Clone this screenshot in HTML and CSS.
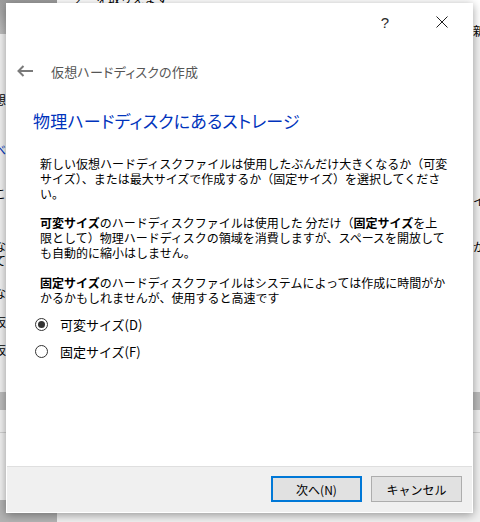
FILE: index.html
```html
<!DOCTYPE html>
<html lang="ja">
<head>
<meta charset="utf-8">
<title>仮想ハードディスクの作成</title>
<link rel="stylesheet" href="styles.css">
</head>
<body>
<div class="screen">
  <div class="backdrop">
    <div class="bg-titlebar"></div>
    <div class="bg-top"><span class="bg-top-text">2 ・を取りえます</span></div>
    <div class="bg-frag f1">想</div>
    <div class="bg-frag f2 blue">ベ</div>
    <div class="bg-frag f3">こ</div>
    <div class="bg-frag f4">な</div>
    <div class="bg-frag f5">て</div>
    <div class="bg-frag f6">な</div>
    <div class="bg-frag f8">仮</div>
    <div class="bg-frag f9">仮</div>
    <div class="bg-frag f10">新</div>
    <div class="bg-frag f11">イ</div>
    <div class="bg-frag f13">か</div>
    <div class="bg-band"></div>
    <div class="bg-line"></div>
    <div class="bg-bottom-left"></div>
  </div>

  <div class="dialog">
    <div class="titlebar">
      <span class="tb-btn help">?</span>
      <span class="tb-btn close">
        <svg width="12" height="12" viewBox="0 0 12 12"><path d="M0.5 0.5 L11.5 11.5 M11.5 0.5 L0.5 11.5" stroke="#1e1e1e" stroke-width="1" fill="none"/></svg>
      </span>
    </div>
    <div class="nav">
      <svg class="back" width="16" height="12" viewBox="0 0 16 12"><path d="M1.5 6 H16 M6.5 1 L1.5 6 L6.5 11" stroke="#7a7a7a" stroke-width="2" fill="none"/></svg>
      <span class="nav-title">仮想ハードディスクの作成</span>
    </div>
    <div class="content">
      <h1 class="heading">物理ハードディスクにあるストレージ</h1>
      <p class="para first">新しい仮想ハードディスクファイルは使用したぶんだけ大きくなるか（可変<br>サイズ）、または最大サイズで作成するか（固定サイズ）を選択してくださ<br>い。</p>
      <p class="para"><b>可変サイズ</b>のハードディスクファイルは使用した 分だけ（<b>固定サイズ</b>を上<br>限として）物理ハードディスクの領域を消費しますが、スペースを開放して<br>も自動的に縮小はしません。</p>
      <p class="para third"><b>固定サイズ</b>のハードディスクファイルはシステムによっては作成に時間がか<br>かるかもしれませんが、使用すると高速です</p>
      <div class="radios">
        <div class="radio"><span class="circle checked"></span><span class="radio-label">可変サイズ(D)</span></div>
        <div class="radio"><span class="circle"></span><span class="radio-label">固定サイズ(F)</span></div>
      </div>
    </div>
    <div class="footer">
      <button class="btn primary">次へ(N)</button>
      <button class="btn">キャンセル</button>
    </div>
  </div>
</div>
</body>
</html>
```

FILE: styles.css
```css
html, body {
  margin: 0;
  padding: 0;
}
body {
  width: 480px;
  height: 522px;
  overflow: hidden;
  background: #ececec;
  font-family: "Noto Sans CJK JP", "Noto Sans", sans-serif;
}
.screen {
  position: relative;
  width: 480px;
  height: 522px;
  overflow: hidden;
}
.backdrop {
  position: absolute;
  inset: 0;
  background: #f0f0f0;
}
.bg-titlebar {
  position: absolute;
  left: 0;
  top: 0;
  width: 57px;
  height: 34px;
  background: linear-gradient(#9c9c9c, #bdbdbd);
}
.bg-top {
  position: absolute;
  left: 57px;
  top: 0;
  right: 0;
  height: 34px;
  background: #fff;
  overflow: hidden;
}
.bg-top-text {
  position: absolute;
  left: 18px;
  top: -10px;
  font-size: 12px;
  color: #000;
}
.bg-frag {
  position: absolute;
  font-size: 12px;
  line-height: 14px;
  color: #000;
}
.bg-frag.blue { color: #0033bc; }
.f1 { left: -6px; top: 93px; }
.f2 { left: -6px; top: 143px; }
.f3 { left: -6px; top: 187px; }
.f4 { left: -6px; top: 239px; }
.f5 { left: -6px; top: 254px; }
.f6 { left: -6px; top: 286px; }
.f8 { left: -6px; top: 315px; }
.f9 { left: -6px; top: 343px; }
.f10 { left: 473px; top: 24px; }
.f11 { left: 473px; top: 194px; }
.f13 { left: 473px; top: 240px; }
.bg-band {
  position: absolute;
  left: 0;
  right: 0;
  top: 392px;
  height: 18px;
  background: #bcbcbc;
}
.bg-line {
  position: absolute;
  left: 0;
  right: 0;
  top: 432px;
  height: 1px;
  background: #d0d0d0;
}
.bg-bottom-left {
  position: absolute;
  left: 0;
  top: 500px;
  width: 57px;
  height: 22px;
  background: #b3b3b3;
}

.dialog {
  position: absolute;
  left: 6px;
  top: 3px;
  width: 467px;
  height: 510px;
  box-sizing: border-box;
  border: 1px solid #fff;
  background: #fff;
  box-shadow: 0 2px 9px rgba(0, 0, 0, 0.38);
  display: flex;
  flex-direction: column;
}
.titlebar {
  height: 36px;
  display: flex;
  justify-content: flex-end;
  align-items: center;
  gap: 11px;
  padding-right: 7px;
}
.tb-btn {
  width: 46px;
  height: 36px;
  display: flex;
  align-items: center;
  justify-content: center;
}
.help {
  font-family: "Liberation Sans", "DejaVu Sans", sans-serif;
  font-size: 15px;
  color: #2a2a2a;
}
.nav {
  height: 62px;
  display: flex;
  align-items: center;
  padding-left: 10px;
}
.back {
  display: block;
}
.nav-title {
  margin-left: 18px;
  font-size: 13px;
  color: #555;
  font-feature-settings: "palt";
  letter-spacing: 0.2px;
}
.content {
  flex: 1;
  padding-left: 26px;
}
.heading {
  margin: 6px 0 0 0;
  font-size: 17px;
  line-height: 26px;
  font-weight: 400;
  color: #0033bc;
  font-feature-settings: "palt";
  letter-spacing: 0.2px;
}
.para {
  margin: 14px 0 0 7px;
  font-size: 12px;
  line-height: 15px;
  color: #000;
  white-space: nowrap;
}
.para.first { margin-top: 22px; }
.para.third { margin-top: 15px; }
.para b { font-weight: 700; }
.radios {
  margin-top: 9px;
  margin-left: 2px;
  display: flex;
  flex-direction: column;
  gap: 7px;
}
.radio {
  height: 20px;
  display: flex;
  align-items: center;
}
.circle {
  width: 13px;
  height: 13px;
  box-sizing: border-box;
  border: 1px solid #333;
  border-radius: 50%;
  background: #fff;
  display: flex;
  align-items: center;
  justify-content: center;
}
.circle.checked::after {
  content: "";
  width: 7px;
  height: 7px;
  border-radius: 50%;
  background: #333;
}
.radio-label {
  margin-left: 12px;
  font-size: 13px;
  color: #000;
}
.footer {
  border-top: 1px solid #dfdfdf;
  background: #f0f0f0;
  padding: 9px 10px 10px 0;
  display: flex;
  justify-content: flex-end;
  gap: 9px;
}
.btn {
  width: 91px;
  height: 26px;
  box-sizing: border-box;
  margin: 0;
  padding: 0;
  border: 1px solid #adadad;
  background: #e1e1e1;
  font-family: "Noto Sans CJK JP", "Noto Sans", sans-serif;
  font-size: 12px;
  color: #000;
}
.btn.primary {
  border: 2px solid #0078d7;
}
```
